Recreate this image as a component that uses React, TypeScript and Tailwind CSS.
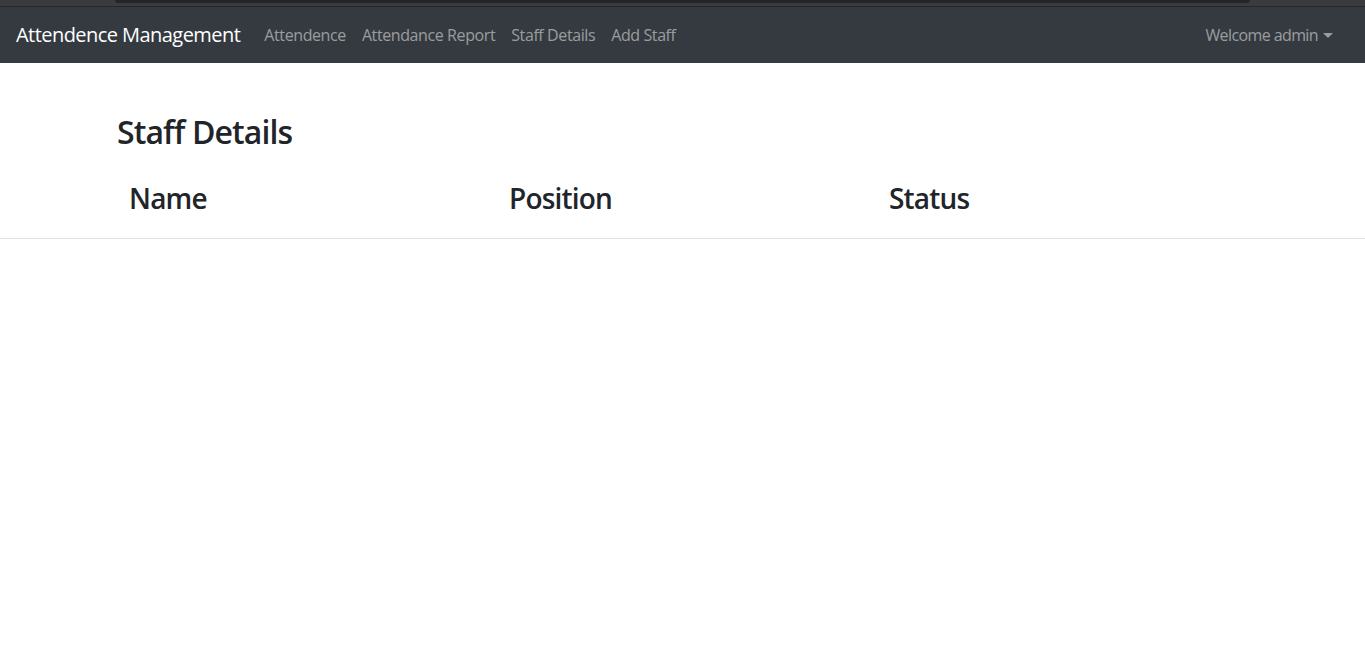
import React from 'react';

const links = ['Attendence', 'Attendance Report', 'Staff Details', 'Add Staff'];

export default function App() {
    return (
        <div className="min-h-screen bg-white text-[#212529]" style={{ fontFamily: '"Open Sans", "Noto Sans", sans-serif' }}>
            {/* browser chrome strip above the page */}
            <div className="h-[7px] bg-[#3a3b3d] border-b border-[#262729] px-[115px]">
                <div className="h-[3px] w-[1135px] bg-[#242526] rounded-b-md"></div>
            </div>

            <nav className="h-[56px] bg-[#343a40] flex items-center px-4">
                <span className="text-[20px] text-white mr-[24px] tracking-[-0.55px]">Attendence Management</span>
                <div className="flex items-center gap-4">
                    {links.map(l => (
                        <span key={l} className="text-[16px] text-white/50 tracking-[-0.4px]">{l}</span>
                    ))}
                </div>
                <div className="ml-auto flex items-center gap-[5px] pr-[16px] text-[16px] text-white/50 tracking-[-0.6px]">
                    Welcome admin
                    <span className="w-0 h-0 border-x-[5px] border-x-transparent border-t-[5px] border-t-white/50"></span>
                </div>
            </nav>

            <div className="pt-[50px]">
                <h2 className="pl-[117px] text-[32px] font-semibold leading-[1.2] tracking-[-0.9px]">Staff Details</h2>
                <div className="mt-[16px] border-b border-[#dee2e6]">
                    <div className="grid grid-cols-[380px_380px_380px] pl-[117px]">
                        {['Name', 'Position', 'Status'].map(h => (
                            <div key={h} className="px-3 pt-[15px] pb-[22px] text-[28px] font-semibold leading-[1.2] tracking-[-0.8px]">{h}</div>
                        ))}
                    </div>
                </div>
            </div>
        </div>
    );
}
